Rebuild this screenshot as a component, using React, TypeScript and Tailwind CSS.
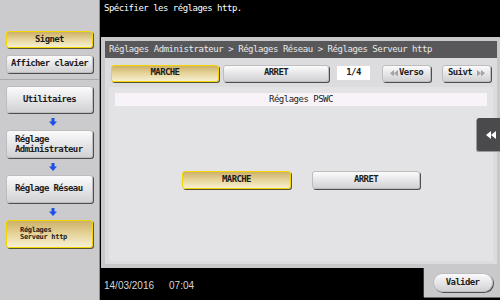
import React from "react";

const mono = { fontFamily: '"DejaVu Sans Mono", "Liberation Mono", monospace' };

function DownArrow() {
  return (
    <div className="flex justify-center h-[17px] items-center">
      <svg width="8" height="8" viewBox="0 0 8 8">
        <path d="M2.5 0h3v3.5H8L4 8 0 3.5h2.5z" fill="#1d50e8" />
      </svg>
    </div>
  );
}

function DoubleLeft({ color, size = 8 }: { color: string; size?: number }) {
  return (
    <svg width={size} height={size * 0.8} viewBox="0 0 10 8">
      <path d="M0 4l5-4v8zM5 4l5-4v8z" fill={color} />
    </svg>
  );
}

function DoubleRight({ color }: { color: string }) {
  return (
    <svg width="8" height="6.4" viewBox="0 0 10 8">
      <path d="M10 4L5 0v8zM5 4L0 0v8z" fill={color} />
    </svg>
  );
}

const grayBtn =
  "bg-gradient-to-b from-[#fbfbfc] to-[#d2d1d4] border border-[#bdbcbf] shadow-[1px_1px_0_#4e4d50] rounded-[3px] text-[#1c1c1c]";
const yellowBtn =
  "bg-gradient-to-b from-[#cdb168] via-[#e6d49a] to-[#f6efd2] border border-[#f2d600] shadow-[1px_1px_0_#5a5230] rounded-[3px] text-[#1c1c1c]";

function SideButton({ label, yellow, className = "" }: { label: React.ReactNode; yellow?: boolean; className?: string }) {
  return (
    <div className={`${yellow ? yellowBtn : grayBtn} w-[87px] flex items-center text-[9px] font-bold tracking-[-0.6px] ${className}`}>
      {label}
    </div>
  );
}

export default function App() {
  return (
    <div className="w-[500px] h-[300px] flex bg-black overflow-hidden" style={mono}>
      {/* Sidebar */}
      <aside className="w-[100px] h-full bg-[#cbcacd] border-r border-[#8d8c8f] shrink-0 flex flex-col">
        <div className="h-[80px] border-b border-[#a9a8ab] pl-[6px] pt-[31px] flex flex-col gap-[7px]">
          <SideButton label="Signet" yellow className="h-[17px] justify-center" />
          <SideButton label="Afficher clavier" className="h-[18px] justify-center" />
        </div>
        <div className="pl-[6px] pt-[6px] flex flex-col">
          <SideButton label="Utilitaires" className="h-[27px] justify-center" />
          <DownArrow />
          <SideButton
            label={<span className="leading-[10px] pl-[8px]">Réglage<br />Administrateur</span>}
            className="h-[28px]"
          />
          <DownArrow />
          <SideButton label={<span className="pl-[8px]">Réglage Réseau</span>} className="h-[28px]" />
          <DownArrow />
          <SideButton
            yellow
            label={<span className="text-[7px] leading-[7px] pl-[13px] tracking-[-0.3px]">Réglages<br />Serveur http</span>}
            className="h-[28px]"
          />
        </div>
      </aside>

      {/* Main */}
      <main className="relative flex-1 flex flex-col bg-black">
        <div className="h-[37px] pl-[4px] pt-[2px] text-[9px] text-white tracking-[-0.5px]">
          Spécifier les réglages http.
        </div>

        <div className="mr-[3px] ml-[1px] h-[231px] bg-[#c9c8cb] p-[4px] flex flex-col">
          <div className="h-[17px] bg-[#58575a] text-[#e9e9ea] text-[9px] tracking-[-0.45px] pl-[4px] flex items-center">
            Réglages Administrateur &gt; Réglages Réseau &gt; Réglages Serveur http
          </div>
          <div className="flex-1 bg-[#dcdbde] flex flex-col px-[6px]">
            <div className="flex items-center h-[29px] pt-[1px]">
              <div className={`${yellowBtn} w-[108px] h-[17px] flex items-center justify-center text-[9px] font-bold tracking-[-0.6px]`}>
                MARCHE
              </div>
              <div className={`${grayBtn} ml-[4px] w-[106px] h-[17px] flex items-center justify-center text-[9px] font-bold tracking-[-0.6px]`}>
                ARRET
              </div>
              <div className="ml-[8px] w-[33px] h-[14px] bg-white flex items-center justify-center text-[9px] font-bold tracking-[-0.6px] text-[#1c1c1c]">
                1/4
              </div>
              <div className={`${grayBtn} ml-[12px] w-[49px] h-[17px] flex items-center justify-center gap-[1px] text-[9px] font-bold tracking-[-0.6px]`}>
                <DoubleLeft color="#a3a2a5" />
                Verso
              </div>
              <div className={`${grayBtn} ml-[11px] w-[49px] h-[17px] flex items-center justify-center gap-[5px] text-[9px] font-bold tracking-[-0.6px]`}>
                Suivt
                <DoubleRight color="#a3a2a5" />
              </div>
            </div>
            <div className="flex-1 bg-[#e3e2e5] mx-[-2px] mb-[3px] rounded-[2px] px-[6px] pt-[6px] flex flex-col">
              <div className="h-[13px] bg-[#f8f3f8] flex items-center justify-center text-[9px] tracking-[-0.5px] text-[#1c1c1c]">
                Réglages PSWC
              </div>
              <div className="flex-1 flex items-center justify-center gap-[21px] pb-[8px]">
                <div className={`${yellowBtn} w-[109px] h-[18px] flex items-center justify-center text-[9px] font-bold tracking-[-0.6px]`}>
                  MARCHE
                </div>
                <div className={`${grayBtn} w-[108px] h-[18px] flex items-center justify-center text-[9px] font-bold tracking-[-0.6px]`}>
                  ARRET
                </div>
              </div>
            </div>
          </div>
        </div>

        {/* Bottom bar */}
        <div className="flex-1 flex">
          <div
            className="flex-1 flex items-center gap-[15px] pl-[4px] pt-[2px] text-[10px] text-[#d6d6d8]"
            style={{ fontFamily: '"Liberation Sans", Arial, sans-serif' }}
          >
            <span>14/03/2016</span>
            <span>07:04</span>
          </div>
          <div className="w-[78px] mr-[3px] mb-[3px] bg-[#c9c8cb] border-l border-[#3a393c] shadow-[1px_1px_0_#6a696c] flex items-center justify-center">
            <div className={`${grayBtn} w-[60px] h-[19px] rounded-[10px] flex items-center justify-center text-[9px] font-bold tracking-[-0.6px]`}>
              Valider
            </div>
          </div>
        </div>

        {/* Side collapse tab */}
        <div className="absolute right-0 top-[118px] w-[27px] h-[33px] bg-[#4a494c] rounded-l-[2px] shadow-[-1px_1px_0_#9a999c] flex items-center justify-center">
          <DoubleLeft color="#ffffff" size={10} />
        </div>
      </main>
    </div>
  );
}
